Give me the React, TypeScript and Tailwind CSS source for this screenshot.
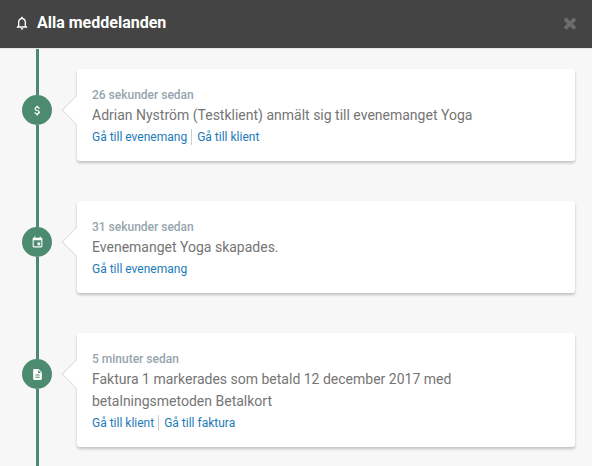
import type { ReactNode } from "react";
import { MdAttachMoney, MdDescription, MdEvent, MdNotificationsNone } from "react-icons/md";

type Notification = {
    id: number;
    icon: ReactNode;
    time: string;
    text: string;
    links: string[];
};

const notifications: Notification[] = [
    {
        id: 1,
        icon: <MdAttachMoney size={13} />,
        time: "26 sekunder sedan",
        text: "Adrian Nyström (Testklient) anmält sig till evenemanget Yoga",
        links: ["Gå till evenemang", "Gå till klient"],
    },
    {
        id: 2,
        icon: <MdEvent size={13} />,
        time: "31 sekunder sedan",
        text: "Evenemanget Yoga skapades.",
        links: ["Gå till evenemang"],
    },
    {
        id: 3,
        icon: <MdDescription size={13} />,
        time: "5 minuter sedan",
        text: "Faktura 1 markerades som betald 12 december 2017 med betalningsmetoden Betalkort",
        links: ["Gå till klient", "Gå till faktura"],
    },
];

function CloseIcon() {
    return (
        <svg width="18" height="18" viewBox="0 0 1792 1792" fill="currentColor" aria-hidden="true">
            <path d="M1490 1322q0 40-28 68l-136 136q-28 28-68 28t-68-28l-294-294-294 294q-28 28-68 28t-68-28l-136-136q-28-28-28-68t28-68l294-294-294-294q-28-28-28-68t28-68l136-136q28-28 68-28t68 28l294 294 294-294q28-28 68-28t68 28l136 136q28 28 28 68t-28 68l-294 294 294 294q28 28 28 68z" />
        </svg>
    );
}

function TimelineItem({ item }: { item: Notification }) {
    return (
        <li className="flex gap-[25px] last:grow">
            {/* Line and badge */}
            <div className="flex w-[30px] shrink-0 flex-col items-center">
                <div className="h-[46px] w-[3px] bg-[#4d8b71]" />
                <div className="flex size-[30px] items-center justify-center rounded-full bg-[#4d8b71] text-white">
                    {item.icon}
                </div>
                <div className="w-[3px] grow bg-[#4d8b71]" />
            </div>

            <div className="min-w-0 flex-1 py-5">
                <article className="relative rounded-[3px] bg-white px-[15px] pt-[17px] pb-[13px] shadow-[0_2px_3px_rgba(0,0,0,0.22)]">
                    {/* Arrow towards the badge */}
                    <div className="absolute top-[30px] -left-[11px] size-[22px] rotate-45 border-b border-l border-[#d5d5d5] bg-white [clip-path:polygon(0_0,100%_100%,0_100%)]" />
                    <p className="text-xs leading-[18px] font-medium text-[#95a5ae]">{item.time}</p>
                    <p className="text-sm leading-[22px] text-[#757575]">{item.text}</p>
                    <div className="flex items-center py-[3px] text-xs leading-4 text-[#1c7ab8]">
                        {item.links.map((link) => (
                            <a
                                key={link}
                                href="#"
                                className="mr-[5px] border-r border-[#cccccc] pr-1 last:mr-0 last:border-0 last:pr-0 hover:underline"
                            >
                                {link}
                            </a>
                        ))}
                    </div>
                </article>
            </div>
        </li>
    );
}

export default function App() {
    return (
        <div className="flex min-h-screen flex-col bg-[#f7f7f7] font-[Roboto,sans-serif]">
            <header className="flex h-[49px] items-center justify-between border-b border-[#e5e5e5] bg-[#444444] pr-[13px] pb-[3px] pl-[14px]">
                <h1 className="flex items-center gap-[7px] text-base font-bold text-white">
                    <MdNotificationsNone size={16} />
                    Alla meddelanden
                </h1>
                <button type="button" aria-label="Stäng" className="text-[#6c6c6c] hover:text-white">
                    <CloseIcon />
                </button>
            </header>
            <ol className="flex grow flex-col pr-[17px] pl-[22px]">
                {notifications.map((item) => (
                    <TimelineItem key={item.id} item={item} />
                ))}
            </ol>
        </div>
    );
}
